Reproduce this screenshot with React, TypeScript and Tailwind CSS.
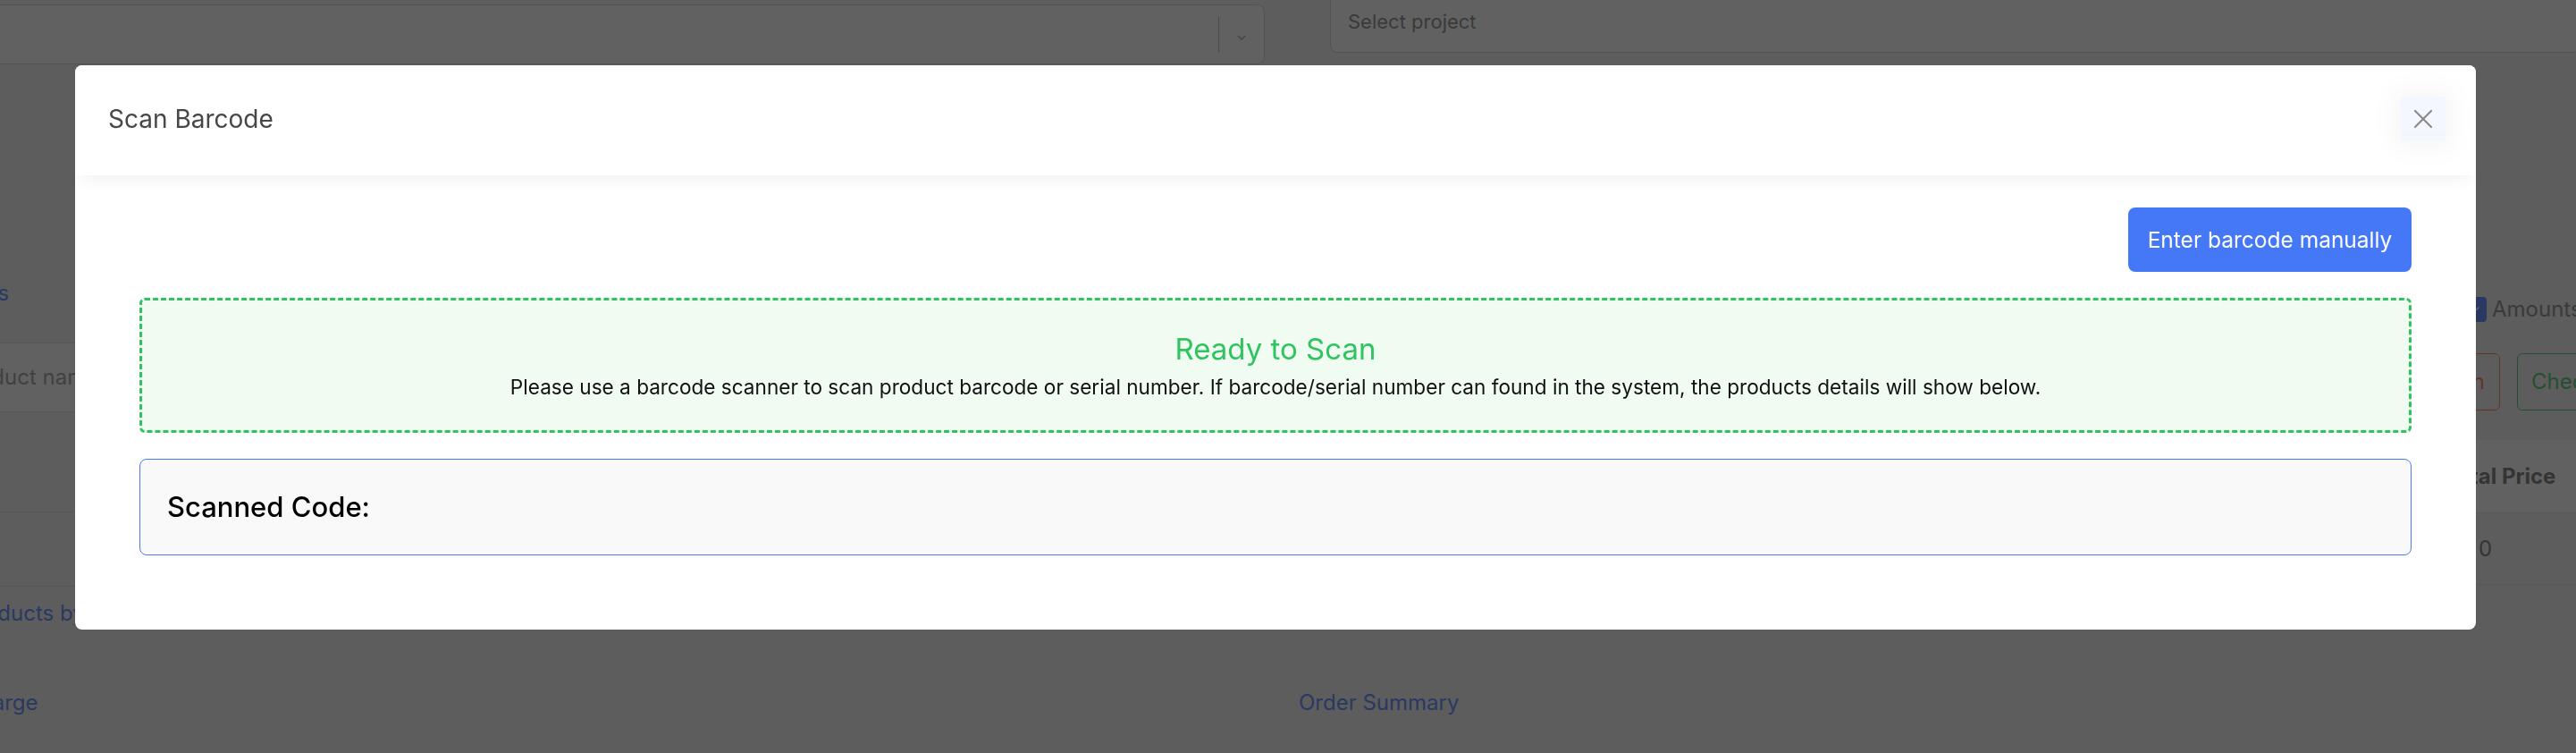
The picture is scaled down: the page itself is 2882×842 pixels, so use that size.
import React from 'react';

const font = "font-['Inter','Liberation_Sans',sans-serif]";

function BackgroundPage() {
  return (
    <div className={`min-h-screen overflow-hidden bg-[#f5f5f5] ${font}`}>
      <div className="flex -ml-[40px] gap-[38px]">
        {/* Left column */}
        <div className="w-[1455px] shrink-0 flex flex-col">
          <div className="mt-[5px] h-[67px] bg-white border border-[#d9d9d9] rounded-[8px] flex items-center justify-end">
            <div className="w-px h-[40px] bg-[#c4c4c4]" />
            <div className="w-[50px] flex justify-center text-[#aaa] text-[16px]">⌄</div>
          </div>
          <div className="mt-[238px] -ml-[12px] text-[24px] text-[#6f95ff]">Items</div>
          <div className="mt-[37px] border-t border-[#e2e2e2] h-[77px] flex items-center bg-white">
            <span className="-ml-[8px] text-[24px] text-[#aaa]">Product name</span>
          </div>
          <div className="border-t border-[#e2e2e2] h-[112px]" />
          <div className="border-t border-[#e2e2e2] h-[83px]" />
          <div className="border-t border-[#e2e2e2] pt-[12px] -ml-[1px] text-[24px] text-[#6f95ff]">Products by barcode</div>
          <div className="mt-[64px] text-[24px] text-[#6f95ff]">Charge</div>
        </div>

        {/* Right column */}
        <div className="w-[1500px] shrink-0 flex flex-col">
          <div className="ml-[35px] -mt-[10px] h-[69px] w-[1400px] bg-white border border-[#d9d9d9] rounded-[8px] flex items-center pl-[19px] text-[22px] text-[#9a9a9a]">
            Select project
          </div>
          <div className="mt-[269px] ml-[1301px] flex items-center gap-[6px]">
            <div className="w-[28px] h-[28px] shrink-0 rounded-[4px] bg-[#6f95ff] flex items-center justify-center text-white text-[16px]">✓</div>
            <span className="text-[24px] text-[#9a9a9a]">Amounts</span>
          </div>
          <div className="mt-[31px] ml-[1214px] flex gap-[19px]">
            <div className="h-[64px] w-[130px] shrink-0 border border-[#ff8a6a] rounded-[6px] flex items-center justify-end pr-[16px] text-[24px] text-[#ff8a6a]">
              Return
            </div>
            <div className="h-[64px] w-[170px] shrink-0 border border-[#5fcf7f] rounded-[6px] flex items-center pl-[15px] text-[24px] text-[#5fcf7f]">
              Checkout
            </div>
          </div>
          <div className="mt-[33px] ml-[1150px] w-[400px] h-[82px] bg-white border-b border-[#e6e6e6] flex items-center pl-[132px] text-[24px] font-bold text-[#8a8a8a]">
            Total Price
          </div>
          <div className="ml-[1150px] w-[400px] h-[80px] border-b border-[#e6e6e6] flex items-center pl-[170px] text-[24px] text-[#8a8a8a]">
            0
          </div>
          <div className="mt-[114px] text-[24px] text-[#6f95ff]">Order Summary</div>
        </div>
      </div>
    </div>
  );
}

function CloseIcon() {
  return (
    <svg width="22" height="22" viewBox="0 0 22 22" fill="none" stroke="#8a8a8a" strokeWidth="2.2" strokeLinecap="round">
      <path d="M2 2 L20 20" />
      <path d="M20 2 L2 20" />
    </svg>
  );
}

export default function App() {
  return (
    <div className="relative">
      <BackgroundPage />

      {/* Backdrop */}
      <div className="fixed inset-0 bg-black/[0.62]" />

      {/* Modal */}
      <div className={`fixed inset-0 flex justify-start items-start pt-[73px] pl-[84px] ${font}`}>
        <div className="w-[2686px] bg-white rounded-[8px] flex flex-col overflow-hidden">
          <div className="relative z-10 h-[123px] flex items-center justify-between pl-[37px] pr-[34px] pb-[4px] bg-white shadow-[0_10px_18px_-6px_rgba(0,0,0,0.06)]">
            <h2 className="text-[28px] text-[#474747] font-normal">Scan Barcode</h2>
            <button className="w-[50px] h-[50px] bg-[#f4f7ff] flex items-center justify-center shadow-[0_0_30px_8px_rgba(0,0,0,0.04)]">
              <CloseIcon />
            </button>
          </div>

          <div className="px-[72px] pt-[36px] pb-[83px] flex flex-col">
            <div className="flex justify-end">
              <button className="h-[72px] w-[317px] bg-[#4478f7] rounded-[8px] text-white text-[24.5px]">
                Enter barcode manually
              </button>
            </div>

            <div className="mt-[29px] h-[151px] rounded-[6px] border-[3px] border-dashed border-[#2fc45f] bg-[#f0fbf2] flex flex-col items-center justify-center">
              <div className="text-[33px] text-[#2fc45f] leading-[48px]">Ready to Scan</div>
              <p className="text-[22.6px] text-[#111] leading-[38px]">
                Please use a barcode scanner to scan product barcode or serial number. If barcode/serial number can found in the system, the products details will show below.
              </p>
            </div>

            <div className="mt-[29px] h-[108px] rounded-[8px] border border-[#4a7cf0] bg-[#f9f9f9] flex items-center pl-[30px]">
              <span className="text-[31px] font-medium text-black">Scanned Code:</span>
            </div>
          </div>
        </div>
      </div>
    </div>
  );
}
